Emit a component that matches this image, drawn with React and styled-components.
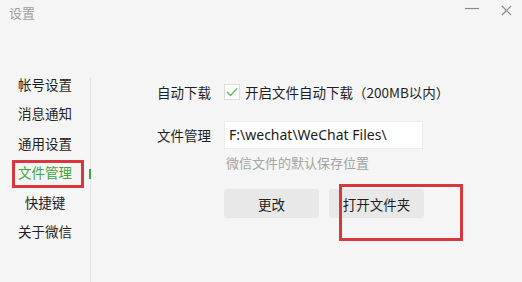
import React from "react";
import styled, { createGlobalStyle } from "styled-components";

const Global = createGlobalStyle`
  html, body { margin: 0; padding: 0; background: #f5f5f5; }
  body { font-family: "Microsoft YaHei", "Noto Sans CJK SC", "Noto Sans", sans-serif; }
  * { box-sizing: border-box; }
`;

const Window = styled.div`
  width: 522px;
  height: 282px;
  background: #f5f5f5;
  display: flex;
  flex-direction: column;
  overflow: hidden;
  color: #1f1f1f;
  font-size: 14px;
`;

const TitleBar = styled.div`
  height: 78px;
  display: flex;
  align-items: flex-start;
  justify-content: space-between;
  padding: 4px 9px 0 9px;
`;

const Title = styled.div`
  font-size: 13px;
  line-height: 18px;
  color: #a0a0a0;
`;

const WinButtons = styled.div`
  display: flex;
  gap: 22px;
  align-items: center;
  height: 10px;
  margin-top: 0px;
  padding-right: 1px;
`;

const Body = styled.div`
  flex: 1;
  display: flex;
`;

const Sidebar = styled.div`
  width: 91px;
  border-right: 1px solid #e2e2e2;
  display: flex;
  flex-direction: column;
  align-items: center;
  gap: 16.4px;
`;

const NavItem = styled.div`
  position: relative;
  width: 90px;
  text-align: center;
  font-size: 13.5px;
  line-height: 13px;
  color: ${(p) => (p.$active ? "#3da63d" : "#1f1f1f")};
`;

const Indicator = styled.span`
  position: absolute;
  right: -1px;
  top: 3px;
  width: 2px;
  height: 10px;
  background: #3da63d;
`;

const RedBox = styled.span`
  position: absolute;
  border: 3px solid #d8383c;
  pointer-events: none;
  left: ${(p) => p.$l}px;
  top: ${(p) => p.$t}px;
  width: ${(p) => p.$w}px;
  height: ${(p) => p.$h}px;
`;

const Content = styled.div`
  flex: 1;
  padding: 6px 0 0 66px;
  display: flex;
  flex-direction: column;
`;

const Row = styled.div`
  display: flex;
  align-items: ${(p) => p.$align || "center"};
  margin-top: ${(p) => p.$mt || 0}px;
`;

const Label = styled.div`
  width: 67px;
  font-size: 13.5px;
  line-height: 16px;
  color: #1f1f1f;
  padding-top: ${(p) => p.$pt || 0}px;
`;

const Check = styled.span`
  width: 16px;
  height: 16px;
  border: 1px solid #dcdcdc;
  background: #fff;
  display: inline-flex;
  align-items: center;
  justify-content: center;
  margin-right: 5px;
`;

const CheckText = styled.span`
  font-size: 13.5px;
  line-height: 16px;
  color: #1f1f1f;
`;

const Field = styled.div`
  display: flex;
  flex-direction: column;
`;

const Input = styled.div`
  width: 199px;
  height: 28px;
  background: #fff;
  border: 1px solid #ececec;
  font-size: 14px;
  line-height: 26px;
  padding-left: 4px;
  color: #1a1a1a;
  font-family: "Microsoft YaHei", "Noto Sans", "Noto Sans CJK SC", sans-serif;
`;

const Hint = styled.div`
  margin-top: 5px;
  font-size: 13px;
  line-height: 17px;
  color: #a3a3a3;
  padding-left: 2px;
`;

const Buttons = styled.div`
  display: flex;
  gap: 10px;
  margin-top: 18px;
  margin-left: 67px;
`;

const Button = styled.div`
  position: relative;
  width: 95px;
  height: 29px;
  border-radius: 3px;
  background: #e8e8e8;
  display: flex;
  align-items: center;
  justify-content: center;
  font-size: 13.5px;
  color: #1f1f1f;
`;

export default function App() {
  const nav = ["帐号设置", "消息通知", "通用设置", "文件管理", "快捷键", "关于微信"];
  return (
    <>
      <Global />
      <Window>
        <TitleBar>
          <Title>设置</Title>
          <WinButtons>
            <svg width="14" height="10" viewBox="0 0 14 10">
              <line x1="0" y1="4.5" x2="14" y2="4.5" stroke="#8a8a8a" strokeWidth="1.2" />
            </svg>
            <svg width="11" height="11" viewBox="0 0 11 11" style={{ marginTop: 2 }}>
              <path d="M1 1 L10 10 M10 1 L1 10" stroke="#8a8a8a" strokeWidth="1.2" />
            </svg>
          </WinButtons>
        </TitleBar>
        <Body>
          <Sidebar>
            {nav.map((n) => (
              <NavItem key={n} $active={n === "文件管理"}>
                {n}
                {n === "文件管理" && (
                  <>
                    <Indicator />
                    <RedBox $l={12} $t={-6} $w={72} $h={28} />
                  </>
                )}
              </NavItem>
            ))}
          </Sidebar>
          <Content>
            <Row>
              <Label>自动下载</Label>
              <Check>
                <svg width="12" height="10" viewBox="0 0 12 10">
                  <path d="M1 5 L4.5 8.5 L11 1.5" fill="none" stroke="#5cb85c" strokeWidth="1.3" />
                </svg>
              </Check>
              <CheckText>开启文件自动下载（200MB以内）</CheckText>
            </Row>
            <Row $align="flex-start" $mt={21}>
              <Label $pt={6}>文件管理</Label>
              <Field>
                <Input>F:\wechat\WeChat Files\</Input>
                <Hint>微信文件的默认保存位置</Hint>
              </Field>
            </Row>
            <Buttons>
              <Button>更改</Button>
              <Button>
                打开文件夹
                <RedBox $l={10} $t={-5} $w={124} $h={57} />
              </Button>
            </Buttons>
          </Content>
        </Body>
      </Window>
    </>
  );
}
